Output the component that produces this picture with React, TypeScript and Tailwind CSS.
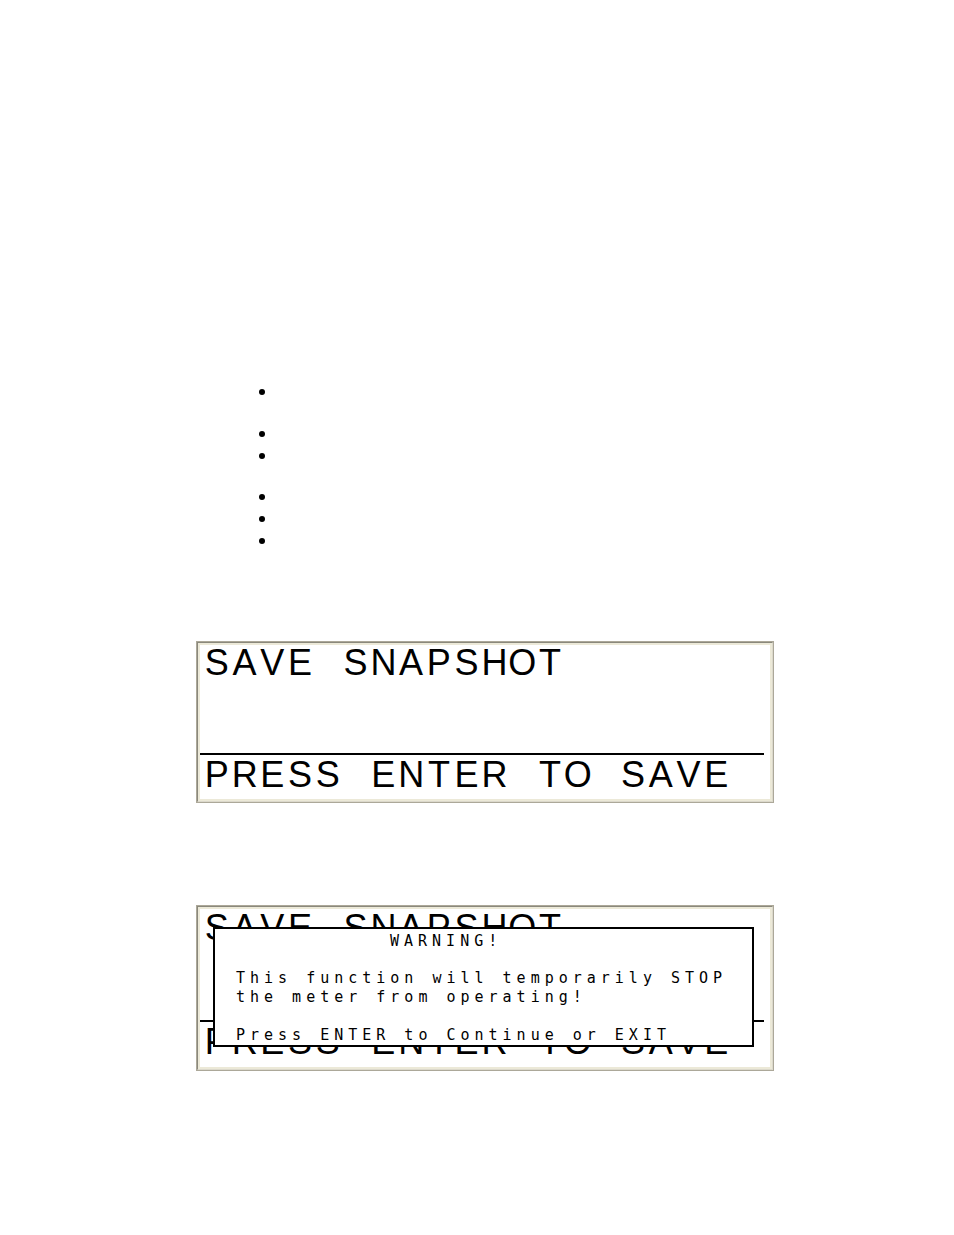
import React from "react";

const mono = { fontFamily: '"DejaVu Sans Mono", "Liberation Mono", monospace' };
const sans = { fontFamily: '"Liberation Sans", Arial, sans-serif' };

function Dot({ extra }: { extra: string }) {
  return (
    <li className={`h-[22px] flex items-center ${extra}`}>
      <span className="block w-[6px] h-[6px] rounded-full bg-black ml-[259px]" />
    </li>
  );
}

function Frame({ children, h }: { children: React.ReactNode; h: string }) {
  return (
    <div className={`relative w-[578px] ${h} ml-[196px] border border-[#aca899] flex`}>
      <div className="flex-1 flex border border-t-[#8a887c] border-l-[#8a887c] border-b-[#dcd9cc] border-r-[#dcd9cc]">
        <div className="flex-1 flex border-2 border-[#ece9d8]">
          <div className="flex-1 bg-white overflow-hidden flex flex-col">{children}</div>
        </div>
      </div>
    </div>
  );
}

function Big({ text, extra }: { text: string; extra: string }) {
  return (
    <div className={`flex h-[36px] text-[36px] leading-[36px] text-black pl-[3px] ${extra}`} style={sans}>
      {text.split("").map((c, i) => (
        <span key={i} className="inline-block w-[27.75px] shrink-0 text-center whitespace-pre">
          {c}
        </span>
      ))}
    </div>
  );
}

const small = "text-[15px] leading-[19px] tracking-[5px] text-black whitespace-pre";

export default function App() {
  return (
    <div className="w-[954px] h-[1235px] bg-white overflow-hidden" style={mono}>
      <ul className="pt-[381px] flex flex-col">
        <Dot extra="" />
        <Dot extra="mt-[20px]" />
        <Dot extra="" />
        <Dot extra="mt-[19px]" />
        <Dot extra="" />
        <Dot extra="" />
      </ul>

      <div className="mt-[89px]">
        <Frame h="h-[162px]">
          <Big text="SAVE SNAPSHOT" extra="" />
          <div className="mt-[72px] h-[2px] w-[564px] bg-black shrink-0" />
          <Big text="PRESS ENTER TO SAVE" extra="mt-[2px]" />
        </Frame>
      </div>

      <div className="mt-[102px]">
        <Frame h="h-[166px]">
          <Big text="SAVE SNAPSHOT" extra="mt-[1px]" />
          <div className="mt-[74px] h-[2px] w-[564px] bg-black shrink-0" />
          <Big text="PRESS ENTER TO SAVE" extra="mt-[2px]" />
          <div className="absolute left-[16px] top-[21px] w-[541px] h-[120px] border-2 border-black bg-white pt-[3px] pl-[21px]">
            <div className={`${small} pl-[154px]`}>WARNING!</div>
            <div className={`${small} mt-[18px]`}>This function will temporarily STOP</div>
            <div className={small}>the meter from operating!</div>
            <div className={`${small} mt-[19px]`}>Press ENTER to Continue or EXIT</div>
          </div>
        </Frame>
      </div>
    </div>
  );
}
